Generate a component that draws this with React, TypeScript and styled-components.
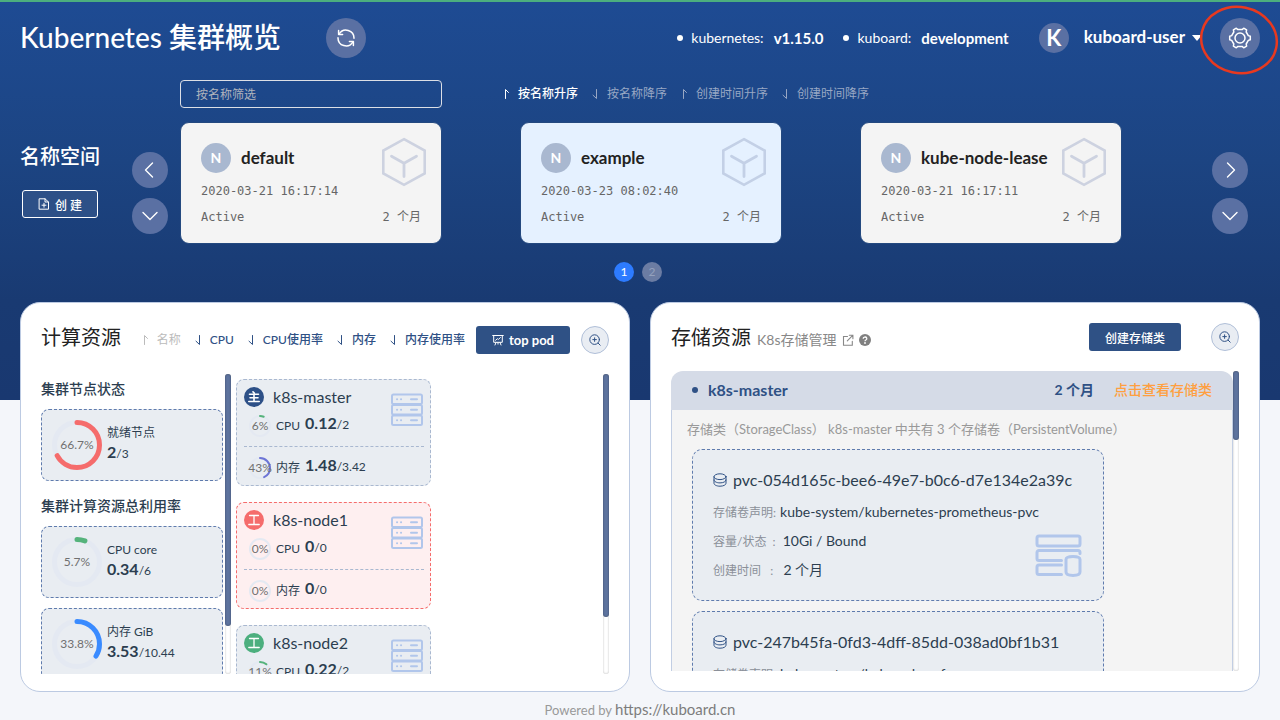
import React from 'react';
import styled, { createGlobalStyle } from 'styled-components';

const GlobalStyle = createGlobalStyle`
  * { box-sizing: border-box; }
  body {
    margin: 0;
    background: #f4f6fa;
    color: #2c3e50;
    font-family: Lato, "Noto Sans CJK SC", sans-serif;
    font-size: 14px;
    line-height: 20px;
  }
  button, input { font-family: inherit; }
  h1, h2, h3, p, dl, dd, dt, ul { margin: 0; padding: 0; font-weight: 400; }
  ul { list-style: none; }
  a { color: inherit; text-decoration: none; }
`;

/* ---------- icons ---------- */

const Stroked = styled.svg`
  flex: none;
  display: block;
  fill: none;
  stroke: currentColor;
  stroke-linecap: round;
  stroke-linejoin: round;
`;

const RefreshIcon = () => (
  <Stroked width="20" height="20" viewBox="0 0 20 20" strokeWidth="1.5">
    <path d="M3.2 5.9A8 8 0 0 1 18 10.2" />
    <path d="M2.6 2.6v3.8h4" />
    <path d="M16.8 14.1A8 8 0 0 1 2 9.8" />
    <path d="M17.4 17.4v-3.8h-4" />
  </Stroked>
);

const GearIcon = () => (
  <Stroked width="24" height="24" viewBox="0 0 24 24" strokeWidth="1.5">
    <path d="M8.3 2.2 L9.9 3.6 H14.1 L15.7 2.2 L18.6 3.9 L18.2 6 L20.3 9.6 L22.3 10.3 V13.7 L20.3 14.4 L18.2 18 L18.6 20.1 L15.7 21.8 L14.1 20.4 H9.9 L8.3 21.8 L5.4 20.1 L5.8 18 L3.7 14.4 L1.7 13.7 V10.3 L3.7 9.6 L5.8 6 L5.4 3.9 Z" />
    <circle cx="12" cy="12" r="5" />
  </Stroked>
);

const FileAddIcon = () => (
  <Stroked width="12" height="12" viewBox="0 0 12 12" strokeWidth="1">
    <path d="M1.5 .8H7L10.5 4v7.2h-9zM7 .8V4h3.5M6 5.2v4M4 7.2h4" />
  </Stroked>
);

const ChevronIcon = ({ turn }: { turn: 'left' | 'right' | 'down' }) => {
  const paths = { left: 'M12.5 3l-7 7 7 7', right: 'M7.5 3l7 7-7 7', down: 'M3 6.5l7 7 7-7' };
  return (
    <Stroked width="20" height="20" viewBox="0 0 20 20" strokeWidth="1.4">
      <path d={paths[turn]} />
    </Stroked>
  );
};

const SortArrow = ({ down }: { down?: boolean }) => (
  <Stroked width="8" height="12" viewBox="0 0 8 12" strokeWidth="1">
    <path d={down ? 'M5.500 1.500v9L2 7.200' : 'M3.500 10.500v-9L6.500 4.500'} />
  </Stroked>
);

const CubeIcon = () => (
  <Stroked width="46" height="50" viewBox="0 0 46 50" strokeWidth="2.6">
    <path strokeLinejoin="miter" d="M23 2.2 43.7 13.6v22.8L23 47.8 2.3 36.4V13.6z" />
    <path strokeWidth="2.8" d="M10.5 19.3 23 26.2l12.5-6.9M23 26.2V39.5" />
  </Stroked>
);

const BoardIcon = () => (
  <Stroked width="12" height="12" viewBox="0 0 12 12" strokeWidth="1">
    <path d="M.7 1.5h10.6M1.7 1.5v6.8h8.6V1.5M3.6 6.3l1.8-1.6 1 .8 2-2M4 8.5 3 11M8 8.5l1 2.5M6 8.5v1.6" />
  </Stroked>
);

const ZoomInIcon = () => (
  <Stroked width="12" height="12" viewBox="0 0 12 12" strokeWidth="1">
    <circle cx="5.6" cy="5.6" r="4.8" />
    <path d="M9.2 9.2l2 2M5.6 3.8v3.6M3.8 5.6h3.6" />
  </Stroked>
);

const ExternalIcon = () => (
  <Stroked width="12" height="12" viewBox="0 0 12 12" strokeWidth="1.1">
    <path strokeLinejoin="miter" d="M5.5 2.5h-4v8.8h8.8v-4M7.3 1.2h3.6v3.6M10.7 1.4 5.3 6.8" />
  </Stroked>
);

const HelpIcon = () => (
  <svg width="12" height="12" viewBox="0 0 12 12">
    <circle cx="6" cy="6" r="6" fill="#808080" />
    <path d="M4.2 4.7a1.8 1.6 0 1 1 2.7 1.3C6.2 6.4 6 6.6 6 7.2" fill="none" stroke="#fff" strokeWidth="1.3" />
    <circle cx="6" cy="9" r=".9" fill="#fff" />
  </svg>
);

const CoinIcon = () => (
  <Stroked width="14" height="14" viewBox="0 0 14 14" strokeWidth="1">
    <ellipse cx="7" cy="3.7" rx="6" ry="2.9" />
    <path d="M1 3.7v6.6c0 1.600 2.700 2.900 6 2.900s6-1.300 6-2.900V3.700M1 7c0 1.600 2.700 2.900 6 2.900S13 8.600 13 7" />
  </Stroked>
);

const ServerIcon = () => (
  <Stroked width="32" height="34" viewBox="0 0 32 34" strokeWidth="2">
    {[1.5, 12, 22.5].map((y) => (
      <g key={y}>
        <rect x="1" y={y} width="30" height="9.5" rx="1.5" />
        <path d={`M6 ${y + 4.8}h.1M10 ${y + 4.8}h.1M20 ${y + 4.8}h6`} />
      </g>
    ))}
  </Stroked>
);

const VolumeIcon = () => (
  <Stroked width="48" height="44" viewBox="0 0 48 44" strokeWidth="3">
    <rect x="2" y="2" width="43" height="10" rx="2" />
    <path d="M26.500 26.500H4a2 2 0 0 1-2-2v-6a2 2 0 0 1 2-2H43a2 2 0 0 1 2 2v1" />
    <path d="M26.500 31H4a2 2 0 0 0-2 2v5.500a2 2 0 0 0 2 2H26.500" />
    <path d="M31 25.500c0-4 14-4 14 0v12.500c0 4.500-14 4.500-14 0z" />
  </Stroked>
);

const MasterGlyph = () => (
  <Stroked width="12" height="12" viewBox="0 0 12 12" strokeWidth="1.6">
    <path d="M1.5 3.3h9M2 6.7h8M.8 10.5h10.4M6 3.3v7M5 .8l1.300 1.200" />
  </Stroked>
);

const WorkerGlyph = () => (
  <Stroked width="12" height="12" viewBox="0 0 12 12" strokeWidth="1.3">
    <path d="M1.5 1.5h9M.8 10.5h10.4M6 1.5v9" />
  </Stroked>
);

/* ---------- page ---------- */

const Page = styled.div`
  position: relative;
  min-height: 720px;
  border-top: 2px solid #4caf7e;
  background: linear-gradient(#1e4b93, #1c4482 40%, #193a72 75%, #193870) no-repeat;
  background-size: 100% 398px;
`;

const TopBar = styled.header`
  display: flex;
  align-items: center;
  padding: 16px 20px 0;
  height: 56px;
  color: #fff;
`;

const Title = styled.h1`
  margin-right: 45px;
  padding-bottom: 2px;
  font-size: 28px;
  line-height: 38px;
  font-weight: 500;
`;

const RoundButton = styled.button<{ $size: number }>`
  display: flex;
  align-items: center;
  justify-content: center;
  flex: none;
  width: ${(p) => p.$size}px;
  height: ${(p) => p.$size}px;
  padding: 0;
  border: 0;
  border-radius: 50%;
  background: #5a70a3;
  color: #fff;
`;

const Versions = styled.ul`
  display: flex;
  gap: 20px;
  margin-left: auto;
`;

const Version = styled.li`
  display: flex;
  align-items: center;
  &::before {
    content: '';
    width: 6px;
    height: 6px;
    margin-right: 8px;
    border-radius: 50%;
    background: #fff;
  }
  b {
    margin-left: 10px;
    font-size: 15px;
  }
`;

const UserMenu = styled.button`
  display: flex;
  align-items: center;
  margin: 0 18px 0 30px;
  padding: 0;
  border: 0;
  background: none;
  color: #fff;
  font-size: 17px;
  font-weight: 700;
`;

const UserName = styled.span`
  padding-bottom: 4px;
`;

const Avatar = styled.span`
  width: 30px;
  margin-right: 15px;
  border-radius: 50%;
  background: #5a70a3;
  font-size: 22px;
  line-height: 30px;
`;

const Caret = styled.span`
  margin-left: 7px;
  border: 5px solid transparent;
  border-top: 6px solid #fff;
  border-bottom: 0;
`;

const GearSpot = styled.div`
  position: relative;
`;

const Marker = styled.svg`
  position: absolute;
  left: -22px;
  top: -15px;
  pointer-events: none;
`;

/* ---------- namespaces ---------- */

const Namespaces = styled.section`
  display: grid;
  grid-template-columns: 100px 36px minmax(0, 1fr) 36px;
  column-gap: 12px;
  padding: 22px 32px 20px 20px;
  color: #fff;
`;

const FilterRow = styled.div`
  grid-column: 3;
  display: flex;
  align-items: center;
  margin-bottom: 14px;
`;

const FilterInput = styled.input`
  width: 262px;
  height: 28px;
  margin-right: 60px;
  padding: 0 15px;
  border: 1px solid #dcdfe6;
  border-radius: 4px;
  background: transparent;
  color: #fff;
  font-size: 12px;
  &::placeholder { color: #b0b4bd; opacity: 1; }
`;

const SortButton = styled.button<{ $color: string; $strong?: boolean }>`
  display: flex;
  align-items: center;
  gap: 8px;
  padding: 0;
  border: 0;
  background: none;
  color: ${(p) => p.$color};
  font-size: 12px;
  line-height: 20px;
  font-weight: ${(p) => (p.$strong ? 500 : 400)};
  white-space: nowrap;
`;

const SortList = styled.div`
  display: flex;
  align-items: center;
  gap: 13px;
`;

const Label = styled.div`
  grid-column: 1;
  padding-top: 20px;
`;

const LabelText = styled.h2`
  font-size: 20px;
  line-height: 28px;
  font-weight: 500;
`;

const CreateButton = styled.button`
  display: flex;
  align-items: center;
  gap: 5px;
  height: 28px;
  margin: 20px 0 0 2px;
  padding: 0 15px;
  border: 1px solid #fff;
  border-radius: 3px;
  background: #2d5087;
  color: #fff;
  font-size: 12px;
  font-weight: 500;
`;

const Arrows = styled.div`
  display: flex;
  flex-direction: column;
  gap: 10px;
  padding-top: 30px;
`;

const CardGrid = styled.div`
  display: grid;
  grid-template-columns: repeat(3, minmax(0, 1fr));
`;

const NsCard = styled.article<{ $active?: boolean }>`
  position: relative;
  width: 262px;
  height: 122px;
  padding: 20px;
  border: 1px solid #24497f;
  border-radius: 9px;
  background: ${(p) => (p.$active ? '#e5f1ff' : '#f4f4f4')};
  color: #666;
  font-family: "DejaVu Sans Mono", "Noto Sans CJK SC", monospace;
  font-size: 12px;
`;

const NsHead = styled.div`
  display: flex;
  align-items: center;
  gap: 10px;
  height: 30px;
  margin-bottom: 8px;
`;

const NsBadge = styled.span`
  width: 30px;
  border-radius: 50%;
  background: #a9b8d0;
  color: #fff;
  font: 700 14px/30px Lato, sans-serif;
  text-align: center;
`;

const NsName = styled.h3`
  color: #222;
  font: 700 17px/30px Lato, sans-serif;
`;

const NsCube = styled.div<{ $active?: boolean }>`
  position: absolute;
  right: 14px;
  top: 14px;
  color: ${(p) => (p.$active ? '#c3d0e6' : '#cdd2e0')};
`;

const NsFoot = styled.div`
  display: flex;
  justify-content: space-between;
  margin-top: 6px;
`;

const Pager = styled.nav`
  grid-column: 1 / -1;
  display: flex;
  justify-content: center;
  gap: 8px;
  margin-top: 18px;
  padding-left: 8px;
`;

const PageDot = styled.button<{ $active?: boolean }>`
  width: 20px;
  height: 20px;
  padding: 0;
  border: 0;
  border-radius: 50%;
  background: ${(p) => (p.$active ? '#2d7bff' : '#6b7ca3')};
  color: ${(p) => (p.$active ? '#fff' : '#94a1bd')};
  font-size: 12px;
  line-height: 20px;
`;

/* ---------- panels ---------- */

const Panels = styled.main`
  display: grid;
  grid-template-columns: repeat(2, minmax(0, 1fr));
  gap: 20px;
  padding: 0 20px;
`;

const Panel = styled.section`
  height: 390px;
  padding: 20px;
  border: 1px solid #bccae2;
  border-radius: 20px;
  background: #fff;
`;

const PanelHead = styled.div`
  display: flex;
  align-items: center;
  height: 28px;
  margin-bottom: 20px;
`;

const ComputeHead = styled(PanelHead)`
  height: 31px;
  align-items: flex-end;
`;

const HeadTools = styled.div`
  display: flex;
  align-items: center;
  justify-content: flex-end;
  flex: 1;
  height: 28px;
  gap: 11px;
`;

const PanelTitle = styled.h2`
  color: #222;
  font-size: 20px;
  line-height: 28px;
`;

const ComputeTitle = styled(PanelTitle)`
  align-self: flex-start;
`;

const PrimaryButton = styled.button`
  display: flex;
  align-items: center;
  gap: 5px;
  height: 28px;
  margin: 0 30px 0 auto;
  padding: 0 16px;
  border: 0;
  border-radius: 3px;
  background: #2f5185;
  color: #fff;
  font-size: 12px;
  font-weight: 500;
  white-space: nowrap;
`;

const ToolButton = styled(PrimaryButton)`
  margin: 0;
  font-size: 13px;
  font-weight: 700;
`;

const ZoomButton = styled(RoundButton)`
  border: 1px solid #b0bfd8;
  background: #e9edf3;
  color: #2f5185;
`;

const Scroller = styled.div`
  display: flex;
  height: 300px;
`;

const ScrollTrack = styled.div`
  flex: none;
  width: 6px;
  border-radius: 3px;
  background: #fff;
  box-shadow: inset 0 0 2px rgba(0, 0, 0, 0.3);
`;

const ScrollThumb = styled.div`
  border-radius: 3px;
  background: #5d739e;
  box-shadow: inset 0 0 2px rgba(0, 0, 0, 0.4);
`;

const Totals = styled.div`
  width: 184px;
  padding-right: 2px;
  overflow: hidden;
`;

const GroupTitle = styled.h3<{ $first?: boolean }>`
  margin: ${(p) => (p.$first ? '5px 0 10px' : '15px 0 10px')};
  font-size: 14px;
  line-height: 20px;
  font-weight: 500;
`;

const TotalCard = styled.article`
  display: flex;
  align-items: center;
  gap: 5px;
  height: 72px;
  margin-bottom: 10px;
  padding: 0 10px;
  border: 1px dashed #5f7bad;
  border-radius: 8px;
  background: #e9edf2;
`;

const Metric = styled.div`
  font-size: 12px;
  line-height: 20px;
`;

const Amount = styled.p`
  padding-bottom: 4px;
  font-size: 12px;
  line-height: 18px;
  color: #2c3e50;
  b { font-size: 16px; }
`;

const RingBox = styled.div<{ $size: number }>`
  position: relative;
  flex: none;
  width: ${(p) => p.$size}px;
  height: ${(p) => p.$size}px;
  svg { display: block; }
  span {
    position: absolute;
    inset: 0;
    display: flex;
    align-items: center;
    justify-content: center;
    color: #707070;
    font-size: 12px;
  }
`;

type RingProps = { size: number; width: number; value: number; color: string; text: string };

const Ring = ({ size, width, value, color, text }: RingProps) => {
  const r = (size - width) / 2;
  const length = 2 * Math.PI * r;
  const c = size / 2;
  return (
    <RingBox $size={size}>
      <svg width={size} height={size} fill="none" strokeWidth={width} aria-hidden>
        <circle cx={c} cy={c} r={r} stroke="#e4e9f2" />
        {value > 0 && (
          <circle
            cx={c}
            cy={c}
            r={r}
            stroke={color}
            strokeLinecap="round"
            strokeDasharray={`${(length * value) / 100} ${length}`}
            transform={`rotate(-90 ${c} ${c})`}
          />
        )}
      </svg>
      <span>{text}</span>
    </RingBox>
  );
};

const Nodes = styled.div`
  flex: 1;
  padding: 5px 0 0 5px;
  overflow: hidden;
`;

const NodeCard = styled.article<{ $bad?: boolean }>`
  position: relative;
  width: 195px;
  height: 107px;
  margin-bottom: 16px;
  padding: 7px 6px 7px 7px;
  border: 1px dashed ${(p) => (p.$bad ? '#f56c6c' : '#a9b8d0')};
  border-radius: 8px;
  background: ${(p) => (p.$bad ? '#feeff0' : '#e9edf2')};
`;

const NodeHead = styled.div`
  display: flex;
  align-items: center;
  gap: 9px;
  font-size: 16px;
`;

const NodeBadge = styled.span<{ $color: string }>`
  display: flex;
  align-items: center;
  justify-content: center;
  width: 20px;
  height: 20px;
  border-radius: 50%;
  background: ${(p) => p.$color};
  color: #fff;
`;

const NodeRow = styled.div`
  display: flex;
  align-items: center;
  gap: 5px;
  height: 39px;
  padding: 0 0 2px 5px;
  font-size: 12px;
  & + & {
    height: 43px;
    padding-bottom: 0;
    border-top: 1px dashed #a9b8d0;
  }
`;

const NodeServer = styled.div`
  position: absolute;
  right: 7px;
  top: 13px;
  color: #b1c6eb;
`;

/* ---------- storage ---------- */

const StorageLink = styled.a`
  display: flex;
  align-items: center;
  gap: 6px;
  margin: 6px 5px 0 6px;
  color: #888;
`;

const HelpSpot = styled.span`
  display: flex;
  margin-top: 6px;
`;

const ClassList = styled.div`
  flex: 1;
  min-width: 0;
  overflow: hidden;
`;

const ClassHead = styled.div`
  display: flex;
  align-items: center;
  height: 39px;
  padding: 0 21px 1px;
  border-radius: 12px 12px 0 0;
  background: #d5dbe7;
  color: #2f5185;
  font-weight: 700;
  &::before {
    content: '';
    width: 6px;
    height: 6px;
    margin-right: 10px;
    border-radius: 50%;
    background: #2f5185;
  }
`;

const ClassName = styled.h3`
  flex: 1;
  font-size: 16px;
  font-weight: 700;
`;

const ClassLink = styled.a`
  margin-left: 20px;
  color: #ff9f40;
  font-weight: 500;
`;

const ClassBody = styled.div`
  padding: 9px 20px 0;
  border: solid #c2cee3;
  border-width: 0 1px;
  background: #f4f4f4;
`;

const ClassNote = styled.p`
  margin: 0 0 10px -5px;
  color: #999;
  font-size: 13px;
  line-height: 20px;
`;

const Pvc = styled.article`
  position: relative;
  max-width: 412px;
  height: 152px;
  margin-bottom: 10px;
  padding: 19px 20px;
  border: 1px dashed #5f7bad;
  border-radius: 10px;
  background: #e9edf2;
`;

const PvcName = styled.h3`
  display: flex;
  align-items: center;
  gap: 6px;
  margin-bottom: 6px;
  font-size: 16px;
  line-height: 22px;
  svg { color: #2f5185; }
`;

const PvcRow = styled.dl`
  display: flex;
  align-items: baseline;
  height: 29px;
  line-height: 29px;
  dt { color: #8b9099; font-size: 12px; margin-right: 4px; white-space: pre; }
`;

const PvcIcon = styled.div`
  position: absolute;
  right: 20px;
  bottom: 22px;
  color: #b1c6eb;
`;

const Footer = styled.footer`
  padding-top: 7px;
  color: #999;
  font-size: 13px;
  line-height: 20px;
  text-align: center;
  a { font-size: 15px; color: #7d7d7d; }
`;

const namespaces = [
  { name: 'default', time: '2020-03-21 16:17:14' },
  { name: 'example', time: '2020-03-23 08:02:40', active: true },
  { name: 'kube-node-lease', time: '2020-03-21 16:17:11' },
];

const nodes = [
  { name: 'k8s-master', master: true, color: '#2d5087', cpu: 6, cpuUsed: '0.12', cpuAll: '2', mem: 43, memUsed: '1.48', memAll: '3.42' },
  { name: 'k8s-node1', bad: true, color: '#f56c6c', cpu: 0, cpuUsed: '0', cpuAll: '0', mem: 0, memUsed: '0', memAll: '0' },
  { name: 'k8s-node2', color: '#4caf7e', cpu: 11, cpuUsed: '0.22', cpuAll: '2', mem: 40, memUsed: '1.36', memAll: '3.42' },
];

const volumes = [
  { name: 'pvc-054d165c-bee6-49e7-b0c6-d7e134e2a39c', claim: 'kube-system/kubernetes-prometheus-pvc' },
  { name: 'pvc-247b45fa-0fd3-4dff-85dd-038ad0bf1b31', claim: 'kube-system/kuboard-perf-pvc' },
];

type TotalProps = { label: string; used: string; all: string; value: number; color: string };

const Total = ({ label, used, all, value, color }: TotalProps) => (
  <TotalCard>
    <Ring size={50} width={5} value={value} color={color} text={`${value}%`} />
    <Metric>
      <p>{label}</p>
      <Amount><b>{used}</b>/{all}</Amount>
    </Metric>
  </TotalCard>
);

export default function App() {
  return (
    <Page>
      <GlobalStyle />
      <TopBar>
        <Title>Kubernetes 集群概览</Title>
        <RoundButton $size={40} aria-label="刷新"><RefreshIcon /></RoundButton>
        <Versions>
          <Version>kubernetes: <b>v1.15.0</b></Version>
          <Version>kuboard: <b>development</b></Version>
        </Versions>
        <UserMenu><Avatar>K</Avatar><UserName>kuboard-user</UserName><Caret /></UserMenu>
        <GearSpot>
          <RoundButton $size={40} aria-label="设置"><GearIcon /></RoundButton>
          <Marker width="82" height="74" viewBox="0 0 82 74" fill="none">
            <ellipse cx="41" cy="37" rx="38" ry="33" stroke="#e8391f" strokeWidth="2.5" transform="rotate(12 41 37)" />
          </Marker>
        </GearSpot>
      </TopBar>

      <Namespaces>
        <FilterRow>
          <FilterInput placeholder="按名称筛选" aria-label="按名称筛选" />
          <SortList>
            <SortButton $color="#fff" $strong><SortArrow />按名称升序</SortButton>
            <SortButton $color="#98a7c4"><SortArrow down />按名称降序</SortButton>
            <SortButton $color="#98a7c4"><SortArrow />创建时间升序</SortButton>
            <SortButton $color="#98a7c4"><SortArrow down />创建时间降序</SortButton>
          </SortList>
        </FilterRow>
        <Label>
          <LabelText>名称空间</LabelText>
          <CreateButton><FileAddIcon />创 建</CreateButton>
        </Label>
        <Arrows>
          <RoundButton $size={36} aria-label="上一页"><ChevronIcon turn="left" /></RoundButton>
          <RoundButton $size={36} aria-label="展开"><ChevronIcon turn="down" /></RoundButton>
        </Arrows>
        <CardGrid>
          {namespaces.map((ns) => (
            <NsCard key={ns.name} $active={ns.active}>
              <NsHead><NsBadge>N</NsBadge><NsName>{ns.name}</NsName></NsHead>
              <NsCube $active={ns.active}><CubeIcon /></NsCube>
              <p>{ns.time}</p>
              <NsFoot><span>Active</span><span>2 个月</span></NsFoot>
            </NsCard>
          ))}
        </CardGrid>
        <Arrows>
          <RoundButton $size={36} aria-label="下一页"><ChevronIcon turn="right" /></RoundButton>
          <RoundButton $size={36} aria-label="展开"><ChevronIcon turn="down" /></RoundButton>
        </Arrows>
        <Pager>
          <PageDot $active>1</PageDot>
          <PageDot>2</PageDot>
        </Pager>
      </Namespaces>

      <Panels>
        <Panel>
          <ComputeHead>
            <ComputeTitle>计算资源</ComputeTitle>
            <HeadTools>
              <SortList>
                <SortButton $color="#bbb"><SortArrow />名称</SortButton>
                <SortButton $color="#2f5185" $strong><SortArrow down />CPU</SortButton>
                <SortButton $color="#2f5185" $strong><SortArrow down />CPU使用率</SortButton>
                <SortButton $color="#2f5185" $strong><SortArrow down />内存</SortButton>
                <SortButton $color="#2f5185" $strong><SortArrow down />内存使用率</SortButton>
              </SortList>
              <ToolButton><BoardIcon />top pod</ToolButton>
              <ZoomButton $size={28} aria-label="放大"><ZoomInIcon /></ZoomButton>
            </HeadTools>
          </ComputeHead>
          <Scroller>
            <Totals>
              <GroupTitle $first>集群节点状态</GroupTitle>
              <Total label="就绪节点" used="2" all="3" value={66.7} color="#f56c6c" />
              <GroupTitle>集群计算资源总利用率</GroupTitle>
              <Total label="CPU core" used="0.34" all="6" value={5.7} color="#55b37b" />
              <Total label="内存 GiB" used="3.53" all="10.44" value={33.8} color="#3a8bff" />
            </Totals>
            <ScrollTrack><ScrollThumb style={{ height: '84%' }} /></ScrollTrack>
            <Nodes>
              {nodes.map((n) => (
                <NodeCard key={n.name} $bad={n.bad}>
                  <NodeHead>
                    <NodeBadge $color={n.color}>{n.master ? <MasterGlyph /> : <WorkerGlyph />}</NodeBadge>
                    {n.name}
                  </NodeHead>
                  <NodeServer><ServerIcon /></NodeServer>
                  <NodeRow>
                    <Ring size={22} width={2} value={n.cpu} color="#55b37b" text={`${n.cpu}%`} />
                    <span>CPU</span>
                    <Amount><b>{n.cpuUsed}</b>/{n.cpuAll}</Amount>
                  </NodeRow>
                  <NodeRow>
                    <Ring size={22} width={2} value={n.mem} color="#6d75d6" text={`${n.mem}%`} />
                    <span>内存</span>
                    <Amount><b>{n.memUsed}</b>/{n.memAll}</Amount>
                  </NodeRow>
                </NodeCard>
              ))}
            </Nodes>
            <ScrollTrack><ScrollThumb style={{ height: '81%' }} /></ScrollTrack>
          </Scroller>
        </Panel>

        <Panel>
          <PanelHead>
            <PanelTitle>存储资源</PanelTitle>
            <StorageLink href="#storage">K8s存储管理 <ExternalIcon /></StorageLink>
            <HelpSpot><HelpIcon /></HelpSpot>
            <PrimaryButton>创建存储类</PrimaryButton>
            <ZoomButton $size={28} aria-label="放大"><ZoomInIcon /></ZoomButton>
          </PanelHead>
          <Scroller>
            <ClassList>
              <ClassHead>
                <ClassName>k8s-master</ClassName>
                2 个月
                <ClassLink href="#class">点击查看存储类</ClassLink>
              </ClassHead>
              <ClassBody>
                <ClassNote>存储类（StorageClass） k8s-master 中共有 3 个存储卷（PersistentVolume）</ClassNote>
                {volumes.map((v) => (
                  <Pvc key={v.name}>
                    <PvcName><CoinIcon />{v.name}</PvcName>
                    <PvcRow><dt>存储卷声明:</dt><dd>{v.claim}</dd></PvcRow>
                    <PvcRow><dt>容量/状态  : </dt><dd>10Gi / Bound</dd></PvcRow>
                    <PvcRow><dt>创建时间   :  </dt><dd>2 个月</dd></PvcRow>
                    <PvcIcon><VolumeIcon /></PvcIcon>
                  </Pvc>
                ))}
              </ClassBody>
            </ClassList>
            <ScrollTrack><ScrollThumb style={{ height: '23%' }} /></ScrollTrack>
          </Scroller>
        </Panel>
      </Panels>
      <Footer>Powered by <a href="https://kuboard.cn">https://kuboard.cn</a></Footer>
    </Page>
  );
}
